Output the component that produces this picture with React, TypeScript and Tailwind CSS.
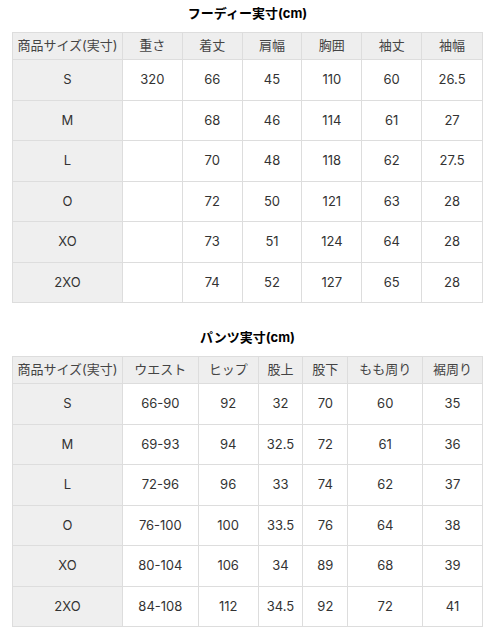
import React from 'react';

interface SizeTableProps {
  title: string;
  headers: string[];
  widths: string[];
  rows: string[][];
}

const SizeTable: React.FC<SizeTableProps> = ({ title, headers, widths, rows }) => {
  return (
    <div className="flex flex-col items-center">
      <h2 className="text-[13px] font-bold text-black leading-[17px] h-[17px] mb-[10px]">{title}</h2>
      <table className="border-collapse table-fixed text-[13px] text-[#333]">
        <colgroup>
          {widths.map((w, i) => (
            <col key={i} className={w} />
          ))}
        </colgroup>
        <thead>
          <tr className="h-[27px] bg-[#eeeeee]">
            {headers.map((h) => (
              <th key={h} className="border border-[#dddddd] font-normal text-[#444] p-0 whitespace-nowrap">
                {h}
              </th>
            ))}
          </tr>
        </thead>
        <tbody>
          {rows.map((row, ri) => (
            <tr key={ri} className="h-[40.5px]">
              {row.map((cell, ci) => (
                <td
                  key={ci}
                  className={`border border-[#dddddd] text-center p-0 ${ci === 0 ? 'bg-[#efefef]' : 'bg-white'}`}
                >
                  {cell}
                </td>
              ))}
            </tr>
          ))}
        </tbody>
      </table>
    </div>
  );
};

const hoodieRows = [
  ['S', '320', '66', '45', '110', '60', '26.5'],
  ['M', '', '68', '46', '114', '61', '27'],
  ['L', '', '70', '48', '118', '62', '27.5'],
  ['O', '', '72', '50', '121', '63', '28'],
  ['XO', '', '73', '51', '124', '64', '28'],
  ['2XO', '', '74', '52', '127', '65', '28'],
];

const pantsRows = [
  ['S', '66-90', '92', '32', '70', '60', '35'],
  ['M', '69-93', '94', '32.5', '72', '61', '36'],
  ['L', '72-96', '96', '33', '74', '62', '37'],
  ['O', '76-100', '100', '33.5', '76', '64', '38'],
  ['XO', '80-104', '106', '34', '89', '68', '39'],
  ['2XO', '84-108', '112', '34.5', '92', '72', '41'],
];

export default function App() {
  return (
    <div
      className="w-[495px] h-[644px] bg-white pl-[12px] pt-[5px]"
      style={{ fontFamily: 'Inter, "Noto Sans CJK JP", sans-serif' }}
    >
      <div className="w-[471px]">
        <SizeTable
          title="フーディー実寸(cm)"
          headers={['商品サイズ(実寸)', '重さ', '着丈', '肩幅', '胸囲', '袖丈', '袖幅']}
          widths={['w-[110px]', 'w-[60px]', 'w-[60px]', 'w-[60px]', 'w-[60px]', 'w-[60px]', 'w-[61px]']}
          rows={hoodieRows}
        />
        <div className="h-[26px]" />
        <SizeTable
          title="パンツ実寸(cm)"
          headers={['商品サイズ(実寸)', 'ウエスト', 'ヒップ', '股上', '股下', 'もも周り', '裾周り']}
          widths={['w-[110px]', 'w-[76px]', 'w-[60px]', 'w-[45px]', 'w-[45px]', 'w-[75px]', 'w-[60px]']}
          rows={pantsRows}
        />
      </div>
    </div>
  );
}
